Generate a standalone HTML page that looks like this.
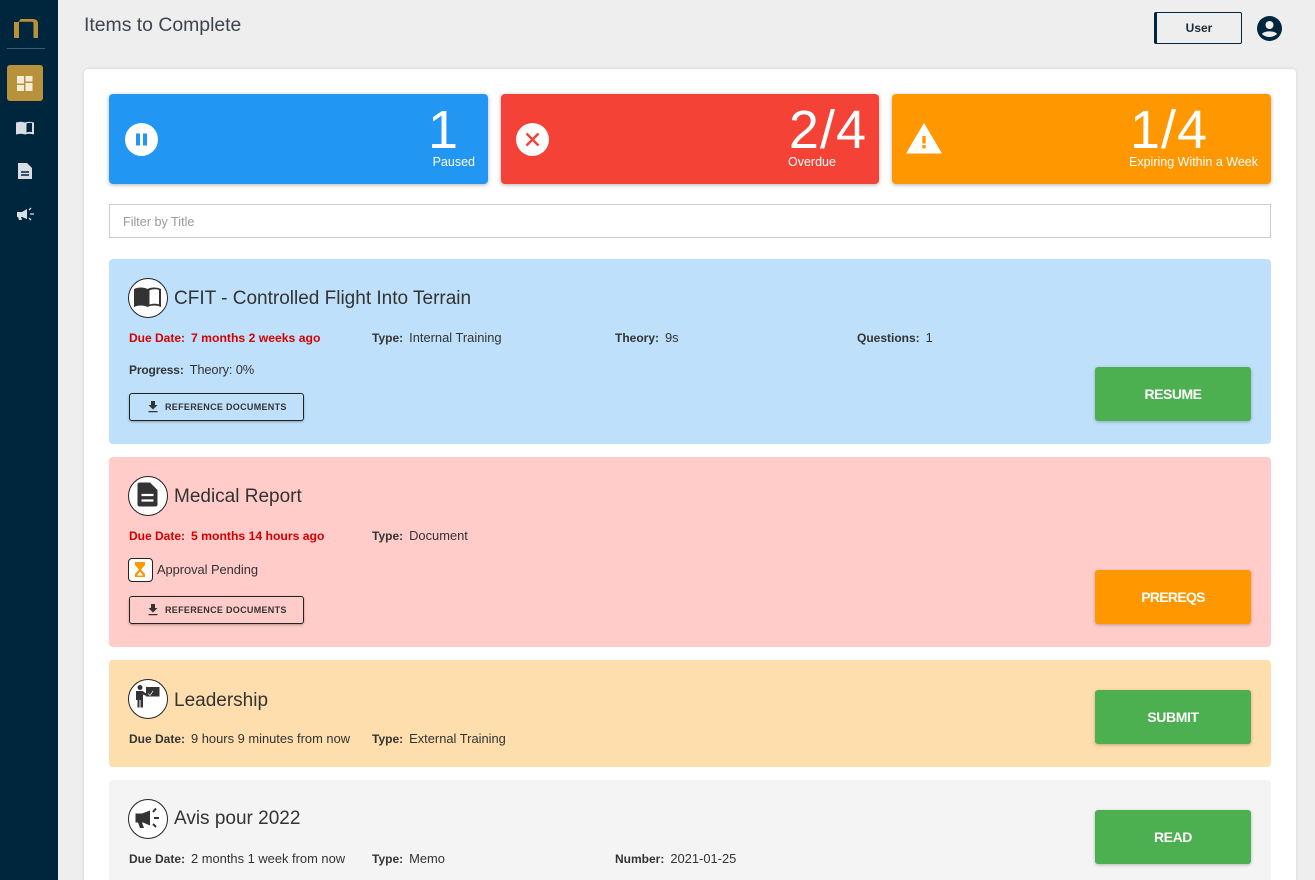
<!DOCTYPE html>
<html><head><meta charset="utf-8"><style>
*{box-sizing:border-box}
html,body{margin:0;padding:0;width:1315px;height:880px;overflow:hidden;background:#eee;font-family:"Liberation Sans",sans-serif;color:#323a45}
#root{position:relative;width:1315px;height:880px;overflow:hidden;background:#eee}
.a{position:absolute}
.t{position:absolute;white-space:nowrap;font-size:12.9px;line-height:16px;color:#333}
.t b{font-weight:700;font-size:12px;margin-right:6px}
.red{color:#d50000;font-weight:700;font-size:12.2px}
.red b{color:#d50000}
.card{position:absolute;left:109px;width:1162px;border-radius:4px}
.stat{position:absolute;top:94px;height:90px;border-radius:4px;box-shadow:0 1px 4px rgba(0,0,0,.3);color:#fff}
.num{position:absolute;top:6px;font-size:54px;line-height:60px;white-space:nowrap}
.lab{position:absolute;top:60px;font-size:12.5px;line-height:16px;white-space:nowrap}
.ic{position:absolute;left:128px;width:40px;height:40px;border:1.5px solid #222;border-radius:50%;background:#fff}
.title{position:absolute;left:174px;font-size:19px;line-height:24px;color:#333;white-space:nowrap}
.btn{position:absolute;left:1095px;width:156px;height:54px;border-radius:3px;color:#fff;font-weight:700;font-size:14px;line-height:54px;text-align:center;box-shadow:0 1px 3px rgba(0,0,0,.25);letter-spacing:-.4px}
.ref{position:absolute;left:129px;width:175px;height:28px;border:1px solid #222;border-radius:3px;font-size:9px;letter-spacing:.3px;font-weight:700;line-height:26px;color:#333;box-shadow:0 1px 2px rgba(0,0,0,.3);padding-left:35px;white-space:nowrap}
.ref svg{position:absolute;left:17px;top:6px}
</style></head><body><div id="root">
<div class="a" style="left:0;top:0;width:58px;height:880px;background:#00263e"></div>
<svg class="a" style="left:14px;top:18px" width="24" height="20" viewBox="0 0 24 20"><path d="M0 4H4.500L6.500 1H19Q24 1 24 6V20H19.500V5.500Q19.500 3.800 18 3.800H5V20H0Z" fill="#b8923a"/></svg>
<div class="a" style="left:7px;top:48px;width:38px;height:1px;background:#3f5f75"></div>
<div class="a" style="left:7px;top:65px;width:36px;height:36px;background:#b8923a;border-radius:3px"></div>
<svg class="a" style="left:17px;top:76px" width="16" height="15" viewBox="0 0 16 15" fill="#f5ecd8"><rect x="0" y="0" width="7" height="7.500"/><rect x="8.500" y="0" width="7" height="5.500"/><rect x="0" y="9" width="7" height="6"/><rect x="8.500" y="7" width="7" height="8"/></svg>
<svg class="a" style="left:16px;top:121px" width="18" height="14" viewBox="0 0 18 14"><path d="M0 1.500Q5 0 9 1.500V13.500Q5 12 0 13.500Z" fill="#d8dee3"/><path d="M9 1.500Q13 0 18 1.500V13.500Q13 12 9 13.500Z" fill="#d8dee3"/><path d="M10.500 2.500Q13 1.500 16 2V11Q13 10.500 10.500 11.500Z" fill="#00263e"/></svg>
<svg class="a" style="left:18px;top:163px" width="14" height="16" viewBox="0 0 14 16"><path d="M0 0H9L14 5V16H0Z" fill="#d8dee3"/><path d="M3 9H11M3 12H11" stroke="#00263e" stroke-width="1.400"/></svg>
<svg class="a" style="left:16px;top:207px" width="19" height="15" viewBox="0 0 19 15" fill="#d8dee3"><path d="M1 5H6L11 2V12L6 10H5L6 13H3L2 10H1Z"/><path d="M13 3L15 1M14 7H18M13 11L15 13" stroke="#d8dee3" stroke-width="1.300"/></svg>

<div class="a" style="left:84px;top:13px;font-size:19.4px;line-height:24px;color:#3c4550;white-space:nowrap">Items to Complete</div>
<div class="a" style="left:1154px;top:12px;width:88px;height:32px;border:1px solid #00263e;border-left:3px solid #00263e;border-radius:2px;text-align:center;font-size:12px;font-weight:700;line-height:30px;color:#1c2b3a">User</div>
<svg class="a" style="left:1257px;top:16px" width="25" height="25" viewBox="0 0 25 25"><circle cx="12.500" cy="12.500" r="12.500" fill="#00263e"/><circle cx="12.500" cy="9" r="4" fill="#eee"/><path d="M5 18C7 14.500 18 14.500 20 18C16 22 9 22 5 18Z" fill="#eee"/></svg>

<div class="a" style="left:84px;top:69px;width:1212px;height:830px;background:#fff;border-radius:4px;box-shadow:0 0 3px rgba(0,0,0,.12)"></div>

<div class="stat" style="left:109px;width:379px;background:#2196f3">
<svg class="a" style="left:16px;top:29px" width="33" height="33" viewBox="0 0 33 33"><circle cx="16.500" cy="16.500" r="16.500" fill="#fff"/><rect x="11" y="10.500" width="4" height="12" fill="#2196f3"/><rect x="18" y="10.500" width="4" height="12" fill="#2196f3"/></svg>
<div class="num" style="right:30px">1</div><div class="lab" style="right:13px">Paused</div></div>
<div class="stat" style="left:501px;width:378px;background:#f44336">
<svg class="a" style="left:15px;top:29px" width="33" height="33" viewBox="0 0 33 33"><circle cx="16.500" cy="16.500" r="16.500" fill="#fff"/><path d="M10.500 10.500L22.500 22.500M22.500 10.500L10.500 22.500" stroke="#f44336" stroke-width="2.400"/></svg>
<div class="num" style="right:12px;letter-spacing:1px">2/4</div><div class="lab" style="left:287px">Overdue</div></div>
<div class="stat" style="left:892px;width:379px;background:#ff9800">
<svg class="a" style="left:14px;top:29px" width="36" height="31" viewBox="0 0 36 31"><path d="M18 0L36 30.500H0Z" fill="#fff"/><rect x="16.300" y="13" width="3.400" height="7.500" fill="#ff9800"/><rect x="16.300" y="22" width="3.400" height="3.400" fill="#ff9800"/></svg>
<div class="num" style="right:63px;letter-spacing:1px">1/4</div><div class="lab" style="right:13px">Expiring Within a Week</div></div>

<div class="a" style="left:109px;top:204px;width:1162px;height:34px;border:1px solid #ccc;background:#fff;font-size:12.6px;line-height:34px;padding-left:13px;color:#9a9a9a">Filter by Title</div>

<div class="card" style="top:259px;height:185px;background:#bfe0fb"></div>
<div class="ic" style="top:278px"><svg width="37" height="37" viewBox="0 0 37 37"><path d="M5 10C9 8 15 8 18.500 10V28C15 26 9 26 5 28Z" fill="#333"/><path d="M18.500 10C22 8 28 8 32 10V28C28 26 22 26 18.500 28Z" fill="#333"/><path d="M20.500 11.500C23 10 27 10 30 11V25.500C27 24.500 23 24.500 20.500 25.700Z" fill="#fff"/></svg></div>
<div class="title" style="top:287px">CFIT - Controlled Flight Into Terrain</div>
<div class="t red" style="left:129px;top:330px"><b>Due Date:</b>7 months 2 weeks ago</div>
<div class="t" style="left:372px;top:330px"><b>Type:</b>Internal Training</div>
<div class="t" style="left:615px;top:330px"><b>Theory:</b>9s</div>
<div class="t" style="left:857px;top:330px"><b>Questions:</b>1</div>
<div class="t" style="left:129px;top:362px;letter-spacing:-.15px"><b>Progress:</b>Theory: 0%</div>
<div class="ref" style="top:393px"><svg width="12" height="14" viewBox="0 0 12 14"><path d="M4 1H8V5H10.500L6 9.500L1.500 5H4Z M1.500 11H10.500V12.300H1.500Z" fill="#333"/></svg>REFERENCE DOCUMENTS</div>
<div class="btn" style="top:367px;background:#4caf50;letter-spacing:-.5px">RESUME</div>

<div class="card" style="top:457px;height:190px;background:#ffccc9"></div>
<div class="ic" style="top:476px"><svg width="37" height="37" viewBox="0 0 37 37"><path d="M11 5.500H21L28.500 13V27.500Q28.500 29.500 26.500 29.500H11Q8.500 29.500 8.500 27.500V7.500Q8.500 5.500 11 5.500Z" fill="#333"/><path d="M12.500 18H24.500M12.500 23.500H24.500" stroke="#fff" stroke-width="2.200"/></svg></div>
<div class="title" style="top:485px">Medical Report</div>
<div class="t red" style="left:129px;top:528px"><b>Due Date:</b>5 months 14 hours ago</div>
<div class="t" style="left:372px;top:528px"><b>Type:</b>Document</div>
<div class="a" style="left:128px;top:558px;width:25px;height:24px;background:#fff;border:1.500px solid #222;border-radius:4px"><svg width="22" height="21" viewBox="0 0 22 21"><path d="M6 3H16V6L12 10.500L16 15V18H6V15L10 10.500L6 6Z" fill="#ff9800"/><path d="M8 16.500L11 12.500L14 16.500Z" fill="#fff"/></svg></div>
<div class="t" style="left:157px;top:562px;letter-spacing:-.05px">Approval Pending</div>
<div class="ref" style="top:596px"><svg width="12" height="14" viewBox="0 0 12 14"><path d="M4 1H8V5H10.500L6 9.500L1.500 5H4Z M1.500 11H10.500V12.300H1.500Z" fill="#333"/></svg>REFERENCE DOCUMENTS</div>
<div class="btn" style="top:570px;background:#ff9800;letter-spacing:-.7px">PREREQS</div>

<div class="card" style="top:660px;height:107px;background:#ffdead"></div>
<div class="ic" style="top:679px"><svg width="37" height="37" viewBox="0 0 37 37"><circle cx="11" cy="7.500" r="2.500" fill="#333"/><path d="M7 11H13.500L19.500 15L18.800 16.500L14 14.500V27.500H11.500V20H10.500V27.500H8.500V20H7Z" fill="#333"/><rect x="17" y="7" width="13.500" height="9.500" fill="#333"/><path d="M19 13.500L21 15.500L24 11" fill="none" stroke="#fff" stroke-width=".7"/></svg></div>
<div class="title" style="top:689px">Leadership</div>
<div class="t" style="left:129px;top:731px"><b>Due Date:</b>9 hours 9 minutes from now</div>
<div class="t" style="left:372px;top:731px"><b>Type:</b>External Training</div>
<div class="btn" style="top:690px;background:#4caf50">SUBMIT</div>

<div class="card" style="top:780px;height:110px;background:#f4f4f4"></div>
<div class="ic" style="top:799px"><svg width="37" height="37" viewBox="0 0 37 37" fill="#333"><path d="M6.500 13.500H13L21 10.500V25.500L14 22.500H13L15 28H11L9 22.500H6.500Z"/><path d="M24 12L27 8.500M25 18H30M24 24L27 27" stroke="#333" stroke-width="2"/></svg></div>
<div class="title" style="top:807px">Avis pour 2022</div>
<div class="t" style="left:129px;top:851px"><b>Due Date:</b>2 months 1 week from now</div>
<div class="t" style="left:372px;top:851px"><b>Type:</b>Memo</div>
<div class="t" style="left:615px;top:851px"><b>Number:</b>2021-01-25</div>
<div class="btn" style="top:810px;background:#4caf50">READ</div>
</div></body></html>
